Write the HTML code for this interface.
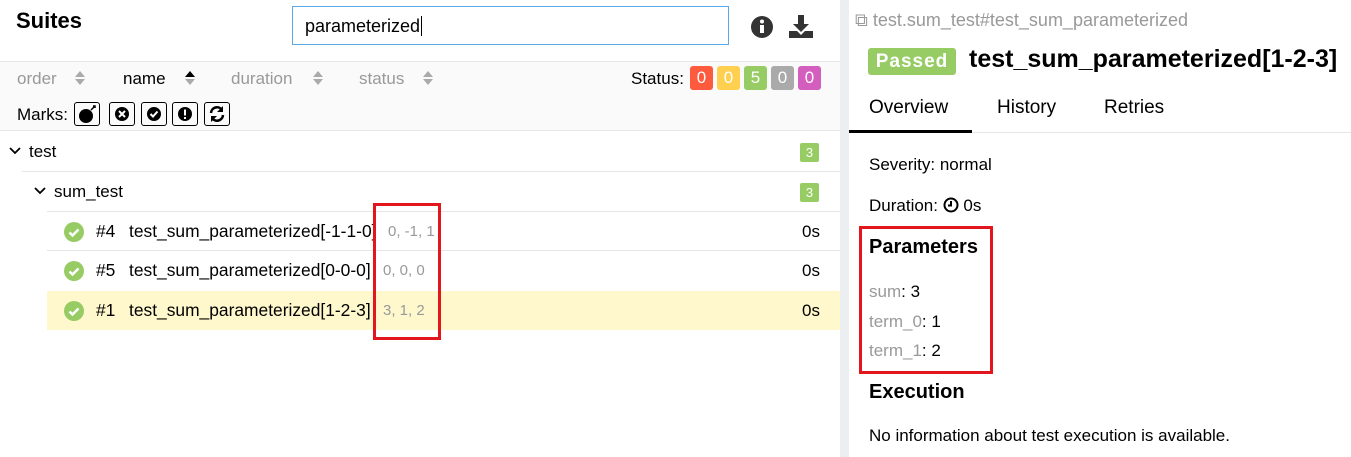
<!DOCTYPE html><html><head><style>
*{box-sizing:border-box;margin:0;padding:0}
body{width:1351px;height:457px;overflow:hidden;font-family:"Liberation Sans",sans-serif;font-size:16px;color:#000;background:#fff;position:relative}
.a{position:absolute;white-space:nowrap}
.g{color:#999}
.badge{position:absolute;top:66px;width:23px;height:24px;border-radius:3px;color:#fff;font-size:17px;text-align:center;line-height:24px}
.mk{position:absolute;top:102px;width:26px;height:24px;border:1px solid #000;border-radius:3px}
.hl{position:absolute;height:1px;background:#e6e6e6}
.chk{position:absolute;width:20px;height:20px;border-radius:50%;background:#97cc64}
.cnt{position:absolute;left:800px;width:19px;height:19px;background:#97cc64;color:#fff;font-size:13px;text-align:center;line-height:19px;border-radius:2px}
.nm{font-size:17.4px}
</style></head><body>
<div class="a" style="left:16px;top:8px;font-size:22px;font-weight:bold">Suites</div>
<div class="a" style="left:292px;top:6px;width:437px;height:39px;border:1px solid #5aa8e6;padding-left:12px;line-height:39px;font-size:18px">parameterized<span style="border-left:1px solid #000;margin-left:1px"></span></div>
<svg class="a" style="left:750px;top:15px" width="24" height="24"><circle cx="12" cy="12" r="11" fill="#333"/><rect x="10" y="10" width="4" height="8" fill="#fff"/><circle cx="12" cy="6.5" r="2" fill="#fff"/></svg>
<svg class="a" style="left:788px;top:13px" width="26" height="26"><path d="M10 2h6v9h5l-8 8-8-8h5z" fill="#333"/><path d="M1 18h8l4 4 4-4h8v7H1z" fill="#333"/></svg>
<div style="position:absolute;left:0;top:61px;width:840px;height:70px;background:#fafafa;border-top:1px solid #e6e6e6;border-bottom:1px solid #e6e6e6"></div>
<div class="a g" style="left:17px;top:69px;font-size:17px">order</div>
<div class="a" style="left:123px;top:69px;font-size:17px">name</div>
<div class="a g" style="left:231px;top:69px;font-size:17px">duration</div>
<div class="a g" style="left:359px;top:69px;font-size:17px">status</div>
<svg class="a" style="left:74px;top:70px" width="12" height="16"><path d="M1 7L6 1l5 6z" fill="#aaa"/><path d="M1 9l5 6 5-6z" fill="#aaa"/></svg>
<svg class="a" style="left:184px;top:70px" width="12" height="16"><path d="M1 7L6 1l5 6z" fill="#000"/><path d="M1 9l5 6 5-6z" fill="#aaa"/></svg>
<svg class="a" style="left:312px;top:70px" width="12" height="16"><path d="M1 7L6 1l5 6z" fill="#aaa"/><path d="M1 9l5 6 5-6z" fill="#aaa"/></svg>
<svg class="a" style="left:422px;top:70px" width="12" height="16"><path d="M1 7L6 1l5 6z" fill="#aaa"/><path d="M1 9l5 6 5-6z" fill="#aaa"/></svg>
<div class="a" style="left:631px;top:69px;font-size:17px">Status:</div>
<div class="badge" style="left:690px;background:#fd5a3e">0</div>
<div class="badge" style="left:717px;background:#ffd050">0</div>
<div class="badge" style="left:744px;background:#97cc64">5</div>
<div class="badge" style="left:771px;background:#aaa">0</div>
<div class="badge" style="left:798px;background:#d35ebe">0</div>
<div class="a" style="left:17px;top:105px;font-size:17px">Marks:</div>
<div class="mk" style="left:74px"><svg width="24" height="22"><circle cx="11" cy="13" r="7" fill="#000"/><path d="M16 7l4-4M18 3h2v2" stroke="#000" stroke-width="1.5" fill="none"/></svg></div>
<div class="mk" style="left:109px"><svg width="24" height="22"><circle cx="12" cy="11" r="7" fill="#000"/><path d="M9 8l6 6M15 8l-6 6" stroke="#fff" stroke-width="2"/></svg></div>
<div class="mk" style="left:141px"><svg width="24" height="22"><circle cx="12" cy="11" r="7" fill="#000"/><path d="M8.5 11l2.5 2.5 4.5-5" stroke="#fff" stroke-width="2" fill="none"/></svg></div>
<div class="mk" style="left:172px"><svg width="24" height="22"><circle cx="12" cy="11" r="7" fill="#000"/><rect x="11" y="6.5" width="2" height="6" fill="#fff"/><rect x="11" y="14" width="2" height="2" fill="#fff"/></svg></div>
<div class="mk" style="left:204px"><svg width="24" height="22"><path d="M6 10a6 6 0 0 1 11-3M18 12a6 6 0 0 1-11 3" stroke="#000" stroke-width="2.5" fill="none"/><path d="M18 3v6h-6zM6 19v-6h6z" fill="#000"/></svg></div>
<svg class="a" style="left:9px;top:146px" width="12" height="10"><path d="M1 2l5 5 5-5" stroke="#000" stroke-width="1.8" fill="none"/></svg>
<div class="a" style="left:29px;top:142px;font-size:17px">test</div>
<div class="cnt" style="top:143px">3</div>
<div class="hl" style="left:22px;top:171px;width:818px"></div>
<svg class="a" style="left:34px;top:186px" width="12" height="10"><path d="M1 2l5 5 5-5" stroke="#000" stroke-width="1.8" fill="none"/></svg>
<div class="a" style="left:54px;top:182px;font-size:17px">sum_test</div>
<div class="cnt" style="top:183px">3</div>
<div class="hl" style="left:47px;top:211px;width:793px"></div>
<div class="hl" style="left:47px;top:250px;width:793px"></div>
<div style="position:absolute;left:47px;top:291px;width:793px;height:39px;background:#fff8cc"></div>
<div class="chk" style="left:64px;top:222px"></div><div class="chk" style="left:64px;top:261px"></div><div class="chk" style="left:64px;top:301px"></div>
<svg class="a" style="left:64px;top:222px" width="20" height="100"><g stroke="#fff" stroke-width="2.5" fill="none"><path d="M5.5 10.5l3 3 6-6"/><path d="M5.5 49.5l3 3 6-6"/><path d="M5.5 89.5l3 3 6-6"/></g></svg>
<div class="a nm" style="left:96px;top:221px">#4</div><div class="a nm" style="left:129px;top:221px">test_sum_parameterized[-1-1-0]</div>
<div class="a nm" style="left:96px;top:260px">#5</div><div class="a nm" style="left:129px;top:260px">test_sum_parameterized[0-0-0]</div>
<div class="a nm" style="left:96px;top:300px">#1</div><div class="a nm" style="left:129px;top:300px">test_sum_parameterized[1-2-3]</div>
<div class="a g" style="left:388px;top:223px;font-size:15px">0, -1, 1</div>
<div class="a g" style="left:383px;top:262px;font-size:15px">0, 0, 0</div>
<div class="a g" style="left:383px;top:302px;font-size:15px">3, 1, 2</div>
<div class="a" style="left:802px;top:222px;font-size:17px">0s</div>
<div class="a" style="left:802px;top:261px;font-size:17px">0s</div>
<div class="a" style="left:802px;top:301px;font-size:17px">0s</div>
<div style="position:absolute;left:373px;top:203px;width:68px;height:137px;border:3px solid #e3161e"></div>
<div style="position:absolute;left:840px;top:0;width:9px;height:457px;background:#eceff1"></div>
<div class="a" style="left:855px;top:10px;color:#999;font-size:18px">⧉ test.sum_test#test_sum_parameterized</div>
<div class="a" style="left:868px;top:48px;width:88px;height:27px;background:#97cc64;border-radius:3px;color:#fff;font-weight:bold;font-size:19px;text-align:center;line-height:27px;letter-spacing:1px">Passed</div>
<div class="a" style="left:969px;top:45px;font-size:25px;font-weight:bold">test_sum_parameterized[1-2-3]</div>
<div class="a" style="left:869px;top:97px;font-size:19px">Overview</div>
<div class="a" style="left:997px;top:97px;font-size:19px">History</div>
<div class="a" style="left:1104px;top:97px;font-size:19px">Retries</div>
<div class="hl" style="left:849px;top:132px;width:502px"></div>
<div style="position:absolute;left:849px;top:130px;width:123px;height:3px;background:#000"></div>
<div class="a" style="left:869px;top:155px;font-size:17px">Severity: normal</div>
<div class="a" style="left:869px;top:196px;font-size:17px">Duration: <svg width="16" height="16" style="vertical-align:-2px"><circle cx="8" cy="8" r="6.5" stroke="#000" stroke-width="2" fill="none"/><path d="M8 4v4.5H5" stroke="#000" stroke-width="2" fill="none"/></svg> 0s</div>
<div style="position:absolute;left:859px;top:226px;width:134px;height:148px;border:3px solid #e3161e"></div>
<div class="a" style="left:869px;top:236px;font-size:20px;font-weight:bold">Parameters</div>
<div class="a" style="left:869px;top:282px;font-size:17px"><span class="g">sum</span>: 3</div>
<div class="a" style="left:869px;top:312px;font-size:17px"><span class="g">term_0</span>: 1</div>
<div class="a" style="left:869px;top:341px;font-size:17px"><span class="g">term_1</span>: 2</div>
<div class="a" style="left:869px;top:381px;font-size:20px;font-weight:bold">Execution</div>
<div class="a" style="left:869px;top:426px;font-size:17px">No information about test execution is available.</div>
</body></html>
